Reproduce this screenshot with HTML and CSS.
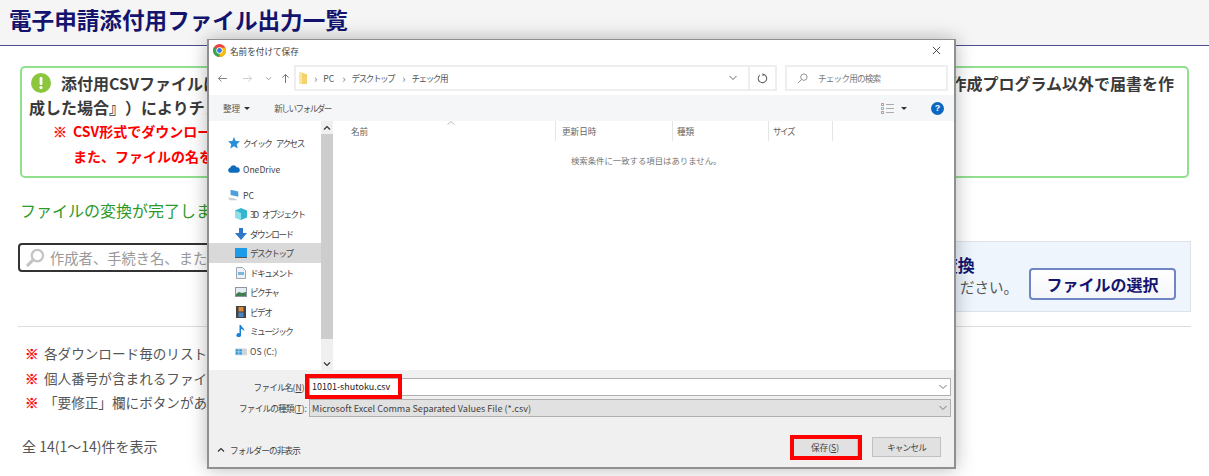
FILE: index.html
```html
<!DOCTYPE html>
<html lang="ja">
<head>
<meta charset="utf-8">
<title>電子申請添付用ファイル出力一覧</title>
<link rel="stylesheet" href="styles.css">
</head>
<body>
<header class="page-head"><h1>電子申請添付用ファイル出力一覧</h1></header>
<main class="page-main">
  <section class="alert">
    <div class="alert-line">
      <span class="alert-lead"><svg class="alert-icon" viewBox="0 0 20 20"><circle cx="10" cy="10" r="10" fill="#8cc63f"/><rect x="8.6" y="4" width="2.8" height="8" rx="1.2" fill="#fff"/><circle cx="10" cy="14.6" r="1.6" fill="#fff"/></svg>添付用CSVファイルについて</span>
      <span>作成プログラム以外で届書を作</span>
    </div>
    <div class="alert-second">成した場合』）によりチェックしてください。</div>
    <div class="alert-red"><span class="alert-mark">※</span>CSV形式でダウンロードしてください。</div>
    <div class="alert-red alert-red-sub">また、ファイルの名を変更しないでください。</div>
  </section>
  <p class="done">ファイルの変換が完了しました。</p>
  <div class="tools">
    <div class="search">
      <svg class="search-icon" viewBox="0 0 20 20"><circle cx="12" cy="8" r="6" fill="none" stroke="#c4c4c4" stroke-width="2.4"/><path d="M7.5 12.5 2 18" stroke="#c4c4c4" stroke-width="3.2" stroke-linecap="round"/></svg>
      <span>作成者、手続き名、または</span>
    </div>
    <div class="convert">
      <div class="convert-text">
        <div class="convert-title">添付ファイルの変換</div>
        <div class="convert-sub">ファイルを選択してください。</div>
      </div>
      <button class="select-btn">ファイルの選択</button>
    </div>
  </div>
  <hr class="rule">
  <ul class="notes">
    <li><span class="note-mark">※</span>各ダウンロード毎のリストです。</li>
    <li><span class="note-mark">※</span>個人番号が含まれるファイルです。</li>
    <li><span class="note-mark">※</span>「要修正」欄にボタンがあります。</li>
  </ul>
  <p class="count">全 14(1～14)件を表示</p>
</main>

<div class="dialog">
  <div class="dlg-title">
    <svg class="chrome" viewBox="0 0 14 14"><circle cx="7" cy="7" r="7" fill="#e8453c"/><path d="M7 7 1 3.6A7 7 0 0 0 7 14Z" fill="#34a853"/><path d="M7 4h6.4A7 7 0 0 1 7 14L7 7Z" fill="#fbbc05"/><circle cx="7" cy="7" r="3.4" fill="#fff"/><circle cx="7" cy="7" r="2.6" fill="#3b78e7"/></svg>
    <span class="dlg-title-text">名前を付けて保存</span>
    <svg class="close" viewBox="0 0 10 10"><path d="M1 1l8 8M9 1 1 9" stroke="#333" stroke-width="1"/></svg>
  </div>
  <div class="dlg-nav">
    <div class="nav-btns">
      <svg viewBox="0 0 12 10" class="nav-arrow"><path d="M11 5H1.5M5 1.5 1.5 5 5 8.500" fill="none" stroke="#777" stroke-width="1"/></svg>
      <svg viewBox="0 0 12 10" class="nav-arrow"><path d="M1 5h9.500M7 1.500 10.500 5 7 8.500" fill="none" stroke="#ccc" stroke-width="1"/></svg>
      <svg viewBox="0 0 8 6" class="nav-down"><path d="M1 1.500 4 4.500 7 1.500" fill="none" stroke="#888" stroke-width="1"/></svg>
      <svg viewBox="0 0 10 12" class="nav-up"><path d="M5 11V1.500M1.500 5 5 1.500 8.500 5" fill="none" stroke="#666" stroke-width="1"/></svg>
    </div>
    <div class="addr">
      <svg class="folder" viewBox="0 0 8 12"><path d="M0 1h5l1 1h2v10H0Z" fill="#f5d36c"/><rect width="3" height="12" fill="#fbe6a2"/></svg>
      <span class="crumb-sep">›</span><span>PC</span><span class="crumb-sep">›</span><span class="cond">デスクトップ</span><span class="crumb-sep">›</span><span class="cond">チェック用</span>
      <span class="addr-drop"><svg viewBox="0 0 8 6"><path d="M.500 1 4 4.500 7.500 1" fill="none" stroke="#666" stroke-width="1"/></svg></span>
      <span class="addr-reload"><svg viewBox="0 0 12 12"><path d="M7.500 1.600A4.600 4.600 0 1 1 3 2.400" fill="none" stroke="#666" stroke-width="1.200"/><path d="M6 0v3.500l2.500-1.700Z" fill="#666"/></svg></span>
    </div>
    <div class="dlg-search">
      <svg viewBox="0 0 12 12"><circle cx="7.500" cy="4.500" r="3.500" fill="none" stroke="#888" stroke-width="1"/><path d="M5 7 1 11" stroke="#888" stroke-width="1"/></svg>
      <span class="semi">チェック用の検索</span>
    </div>
  </div>
  <div class="dlg-toolbar">
    <span class="tool-org">整理<i class="caret"></i></span>
    <span class="tool-new cond">新しいフォルダー</span>
    <svg class="view-icon" viewBox="0 0 13 11"><g fill="none" stroke="#aaa" stroke-width="1"><rect x=".5" y=".5" width="2" height="2" stroke="#c99"/><rect x=".5" y="4.500" width="2" height="2" stroke="#9bc"/><rect x=".5" y="8.500" width="2" height="2" stroke="#c99"/><path d="M5 1.500h8M5 5.500h8M5 9.500h8"/></g></svg>
    <i class="caret caret-view"></i>
    <span class="help">?</span>
  </div>
  <div class="dlg-body">
    <nav class="tree">
      <div class="tree-list">
        <div class="tree-row tree-top tree-gap cond"><svg viewBox="0 0 12 12"><path d="M6 0l1.700 3.900 4.300.4-3.200 2.900.9 4.200L6 9.300 2.300 11.400l.9-4.200L0 4.300l4.300-.4Z" fill="#2b8fd8"/></svg>クイック アクセス</div>
        <div class="tree-row tree-top tree-gap"><svg viewBox="0 0 14 9"><path d="M3 9a3 3 0 0 1-.5-5.900A4 4 0 0 1 10 2.500 3.200 3.200 0 0 1 11 9Z" fill="#0f6cbd"/></svg>OneDrive</div>
        <div class="tree-row tree-top"><svg viewBox="0 0 14 12"><path d="M3 0l9 2v6L3 6Z" fill="#4a9fdc"/><path d="M0 9l8 1 3 2H2Z" fill="#c8ccd0"/></svg>PC</div>
        <div class="tree-row cond"><svg viewBox="0 0 12 12"><path d="M6 0l6 2.500v7L6 12 0 9.500v-7Z" fill="#35b6cf"/><path d="M6 5v7L0 9.500v-7Z" fill="#8fe0ea"/></svg>3D オブジェクト</div>
        <div class="tree-row cond"><svg viewBox="0 0 12 12"><path d="M4 0h4v5h4l-6 7-6-7h4Z" fill="#2e78c8"/></svg>ダウンロード</div>
        <div class="tree-row tree-sel cond"><svg viewBox="0 0 12 10"><rect width="12" height="9" fill="#1e9be8"/><rect y="9" width="12" height="1" fill="#555"/></svg>デスクトップ</div>
        <div class="tree-row cond"><svg viewBox="0 0 10 12"><path d="M.5.5h6l3 3v8H.5Z" fill="#eef2f6" stroke="#9aa7b3"/><path d="M2 5h6v3H2Z" fill="#7fb6dc"/></svg>ドキュメント</div>
        <div class="tree-row cond"><svg viewBox="0 0 12 10"><rect x=".5" y=".5" width="11" height="9" fill="#e6edf2" stroke="#8a97a3"/><path d="M1 7l3-2 3 1 4-1v4H1Z" fill="#3f7e52"/></svg>ピクチャ</div>
        <div class="tree-row cond"><svg viewBox="0 0 10 12"><rect width="10" height="12" fill="#444"/><rect x="2.500" y="1" width="5" height="4.500" fill="#d8893c"/><rect x="2.500" y="6.500" width="5" height="4.500" fill="#4b86c4"/></svg>ビデオ</div>
        <div class="tree-row cond"><svg viewBox="0 0 10 12"><path d="M3.500 0H5c.5 2.500 3.500 3 3.500 6C7.500 4.800 6.200 4.300 5 4v6a2.300 2 0 1 1-1.500-1.800Z" fill="#1b7fd4"/></svg>ミュージック</div>
        <div class="tree-row"><svg viewBox="0 0 14 12"><rect y="3" width="14" height="8" rx="1" fill="#cfd4d8"/><path d="M1 4h3v2.500H1ZM5 4h3v2.500H5ZM1 7.500h3V10H1ZM5 7.500h3V10H5Z" fill="#1e9be8"/></svg>OS (C:)</div>
      </div>
      <div class="scroll">
        <svg class="scroll-arrow" viewBox="0 0 8 6"><path d="M1 4.500 4 1.500 7 4.500" fill="none" stroke="#333" stroke-width="1.200"/></svg>
        <div class="scroll-track"><div class="scroll-thumb"></div></div>
        <svg class="scroll-arrow" viewBox="0 0 8 6"><path d="M1 1.500 4 4.500 7 1.500" fill="none" stroke="#333" stroke-width="1.200"/></svg>
      </div>
    </nav>
    <section class="files">
      <div class="cols">
        <span class="col col-name">名前<svg class="sort" viewBox="0 0 8 4"><path d="M.500 3.500 4 .500 7.500 3.500" fill="none" stroke="#bbb"/></svg></span>
        <span class="col col-date">更新日時</span>
        <span class="col col-type">種類</span>
        <span class="col col-size cond">サイズ</span>
      </div>
      <div class="empty">検索条件に一致する項目はありません。</div>
    </section>
  </div>
  <div class="dlg-foot">
    <div class="field">
      <label class="field-label"><span class="semi">ファイル名</span>(<u>N</u>):</label>
      <div class="field-input">10101-shutoku.csv<svg viewBox="0 0 8 6"><path d="M.500 1 4 4.500 7.500 1" fill="none" stroke="#777"/></svg></div>
    </div>
    <div class="field field-type">
      <label class="field-label"><span class="semi">ファイルの種類</span>(<u>T</u>):</label>
      <div class="field-input field-select">Microsoft Excel Comma Separated Values File (*.csv)<svg viewBox="0 0 8 6"><path d="M.500 1 4 4.500 7.500 1" fill="none" stroke="#777"/></svg></div>
    </div>
    <div class="foot-actions">
      <span class="hide-folders"><svg viewBox="0 0 8 6"><path d="M1 4.500 4 1.500 7 4.500" fill="none" stroke="#333" stroke-width="1.200"/></svg><span class="semi">フォルダーの非表示</span></span>
      <span class="btn btn-save">保存(<u>S</u>)</span>
      <span class="btn"><span class="semi">キャンセル</span></span>
    </div>
  </div>
  <div class="mark mark-name"></div>
  <div class="mark mark-save"></div>
</div>
</body>
</html>
```
FILE: styles.css
```css
* { box-sizing: border-box; }
html, body { margin: 0; height: 476px; overflow: hidden; }
body { position: relative; background: #fff; color: #444; font-family: "Noto Sans CJK JP", "Noto Sans", sans-serif; text-spacing-trim: space-all; }

.page-head { height: 46px; background: #f5f5f5; border-bottom: 1px solid #4a4f8c; padding: 3px 9px 0; }
.page-head h1 { margin: 0; font-size: 22.600px; line-height: 34px; font-weight: 700; color: #14146e; }

.page-main { padding: 20px 18px 0 20px; }
.alert { height: 112px; border: 2px solid #90e090; border-radius: 5px; padding: 3px 13px 0 7px; width: 1169px; color: #3a3a3a; font-size: 16px; font-weight: 700; line-height: 24px; }
.alert-line { display: flex; justify-content: space-between; }
.alert-lead { display: flex; align-items: center; margin-left: 2px; }
.alert-icon { width: 20px; height: 20px; margin-right: 10px; }
.alert-red { color: #f00; margin-left: 24px; font-size: 14px; line-height: 25px; }
.alert-mark { margin-right: 6px; -webkit-text-stroke: .4px #f00; }
.alert-red-sub { margin-left: 44px; }

.done { margin: 21px 0 0; font-size: 16px; line-height: 22px; color: #2b9a2b; }

.tools { display: flex; justify-content: space-between; align-items: flex-start; margin: 20px 0 0 -2px; }
.search { display: flex; align-items: center; width: 500px; height: 29px; margin-top: 2px; border: 2px solid #333; border-radius: 4px; padding-left: 6px; color: #999; font-size: 14.300px; }
.search-icon { width: 19px; height: 19px; margin-right: 5px; }
.convert { display: flex; align-items: flex-start; width: 400px; height: 71px; background: #eef5fd; border: 1px solid #dfe3e8; padding: 12px 14px 0 0; justify-content: flex-end; }
.convert-title { font-size: 17px; font-weight: 700; color: #14146e; line-height: 22px; padding-left: 6px; white-space: nowrap; }
.convert-sub { font-size: 14.500px; line-height: 22px; color: #555; white-space: nowrap; }
.select-btn { width: 147px; height: 32px; margin: 14px 0 0 11px; background: linear-gradient(#fff, #f4f6fa); border: 2px solid #7085c4; border-radius: 4px; font: 700 16px "Noto Sans CJK JP", sans-serif; color: #14146e; padding: 0; }

.rule { margin: 14px 0 0 -2px; border: 0; border-top: 1px solid #ddd; }
.notes { list-style: none; margin: 14px 0 0; padding: 0 0 0 5px; font-size: 13.600px; line-height: 24.500px; color: #555; }
.note-mark { color: #f00; font-weight: 700; margin-right: 5.400px; -webkit-text-stroke: .4px #f00; }
.count { margin: 21px 0 0 2px; font-size: 14px; line-height: 20px; color: #555; }

/* dialog over the page */
.dialog { position: absolute; left: 207px; top: 39px; width: 749px; height: 430px; display: flex; flex-direction: column; background: #fff; border: 1px solid #909090; border-width: 1px 2px 2px 2px; box-shadow: 0 0 18px rgba(0, 0, 0, .28); color: #444; font-size: 8.600px; line-height: 14px; }
.cond { letter-spacing: -1.500px; word-spacing: 4px; }
.semi { letter-spacing: -.800px; }

.dlg-title { display: flex; align-items: center; height: 25px; padding: 0 13px 4px 4px; color: #444; }
.chrome { width: 13px; height: 13px; margin-right: 4px; }
.close { width: 9px; height: 9px; margin-left: auto; }

.dlg-nav { display: flex; align-items: stretch; height: 26px; padding-right: 6px; }
.nav-btns { display: flex; align-items: center; width: 85px; padding-left: 8px; }
.nav-arrow { width: 11px; height: 9px; margin-right: 14px; }
.nav-down { width: 7px; height: 5px; margin: 0 9px 0 -2px; }
.nav-up { width: 9px; height: 11px; }
.addr { display: flex; align-items: center; width: 483px; border: 2px solid #eeeeee; padding-left: 3px; color: #555; }
.folder { width: 8px; height: 12px; margin-right: -1px; }
.crumb-sep { margin: 0 6px 0 8px; color: #777; font-size: 11px; }
.addr-drop { display: flex; align-items: center; margin-left: auto; padding-right: 11px; }
.addr-drop svg { width: 8px; height: 6px; }
.addr-reload { display: flex; align-items: center; justify-content: center; width: 27px; height: 100%; border-left: 2px solid #eee; }
.addr-reload svg { width: 11px; height: 11px; }
.dlg-search { display: flex; align-items: center; width: 163px; margin-left: 8px; border: 2px solid #eee; padding-left: 10px; color: #777; }
.dlg-search svg { width: 11px; height: 11px; margin-right: 10px; }

.dlg-toolbar { display: flex; align-items: center; height: 26px; margin-top: 4px; background: #f5f6f7; padding: 0 10px 0 14px; color: #555; }
.tool-org { display: flex; align-items: center; }
.caret { display: inline-block; margin-left: 4px; border: 3px solid transparent; border-top-color: #333; border-bottom: 0; }
.tool-new { margin-left: 24px; }
.view-icon { width: 13px; height: 11px; margin-left: auto; }
.caret-view { margin: 0 0 0 7px; }
.help { width: 13px; height: 13px; margin-left: 24px; border-radius: 50%; background: #0b66c2; color: #fff; font: 700 9px/13px "Liberation Sans", sans-serif; text-align: center; }

.dlg-body { display: flex; height: 249px; }
.tree { display: flex; width: 124px; flex: none; }
.tree-list { flex: 1; padding-top: 11.750px; }
.tree-row { display: flex; align-items: center; height: 19.500px; padding-left: 26px; color: #444; white-space: nowrap; }
.tree-row svg { width: 12px; height: 12px; margin-right: 3px; flex: none; }
.tree-top { padding-left: 19px; }
.tree-gap { margin-bottom: 6.500px; }
.tree-sel { background: #d9d9d9; }
.scroll { display: flex; flex-direction: column; align-items: stretch; width: 12px; flex: none; background: #f0f0f0; }
.scroll-arrow { width: 8px; height: 6px; margin: 4px auto 3px; flex: none; }
.scroll-track { flex: 1; }
.scroll-thumb { height: 205px; background: #cdcdcd; }

.files { flex: 1; }
.cols { display: flex; height: 21px; color: #666; align-items: flex-start; }
.col { display: block; height: 20px; padding-left: 6px; border-right: 1px solid #e5e5e5; padding-top: 3px; }
.col-name { position: relative; width: 223px; padding-left: 18px; }
.sort { position: absolute; left: 114px; top: 0; width: 8px; height: 4px; }
.col-date { width: 117px; }
.col-type { width: 96px; padding-left: 4px; }
.col-size { width: 64px; padding-left: 4px; }
.empty { margin-top: 11px; padding-left: 238px; color: #777; font-size: 8.400px; }

.dlg-foot { flex: 1; background: #f0f0f0; padding-top: 8px; }
.field { display: flex; align-items: center; height: 18px; padding-right: 3px; }
.field-type { margin-top: 3px; }
.field-label { width: 100px; text-align: right; padding-right: 2px; color: #444; flex: none; }
.field-input { display: flex; align-items: center; justify-content: space-between; flex: 1; height: 18px; background: #fff; border: 1px solid #b0b0b0; padding: 0 3px 0 2px; color: #222; font-size: 9px; white-space: nowrap; }
.field-input svg { width: 8px; height: 6px; }
.field-select { background: #e1e1e1; color: #444; font-size: 9.100px; }
.foot-actions { display: flex; align-items: center; margin-top: 20px; padding: 0 13px 0 8px; }
.hide-folders { display: flex; align-items: center; margin-right: auto; padding-top: 5px; }
.hide-folders svg { width: 8px; height: 6px; margin-right: 5px; }
.btn { display: block; width: 69px; height: 20px; margin-left: 14px; background: #e1e1e1; border: 1px solid #c0c0c0; text-align: center; line-height: 18px; color: #444; }
.btn-save { width: 66px; }

/* red annotation boxes laid over the dialog */
.mark { position: absolute; border: 4px solid #f00; }
.mark-name { left: 96px; top: 334px; width: 97px; height: 25px; }
.mark-save { left: 581px; top: 395px; width: 72px; height: 25px; }
```
